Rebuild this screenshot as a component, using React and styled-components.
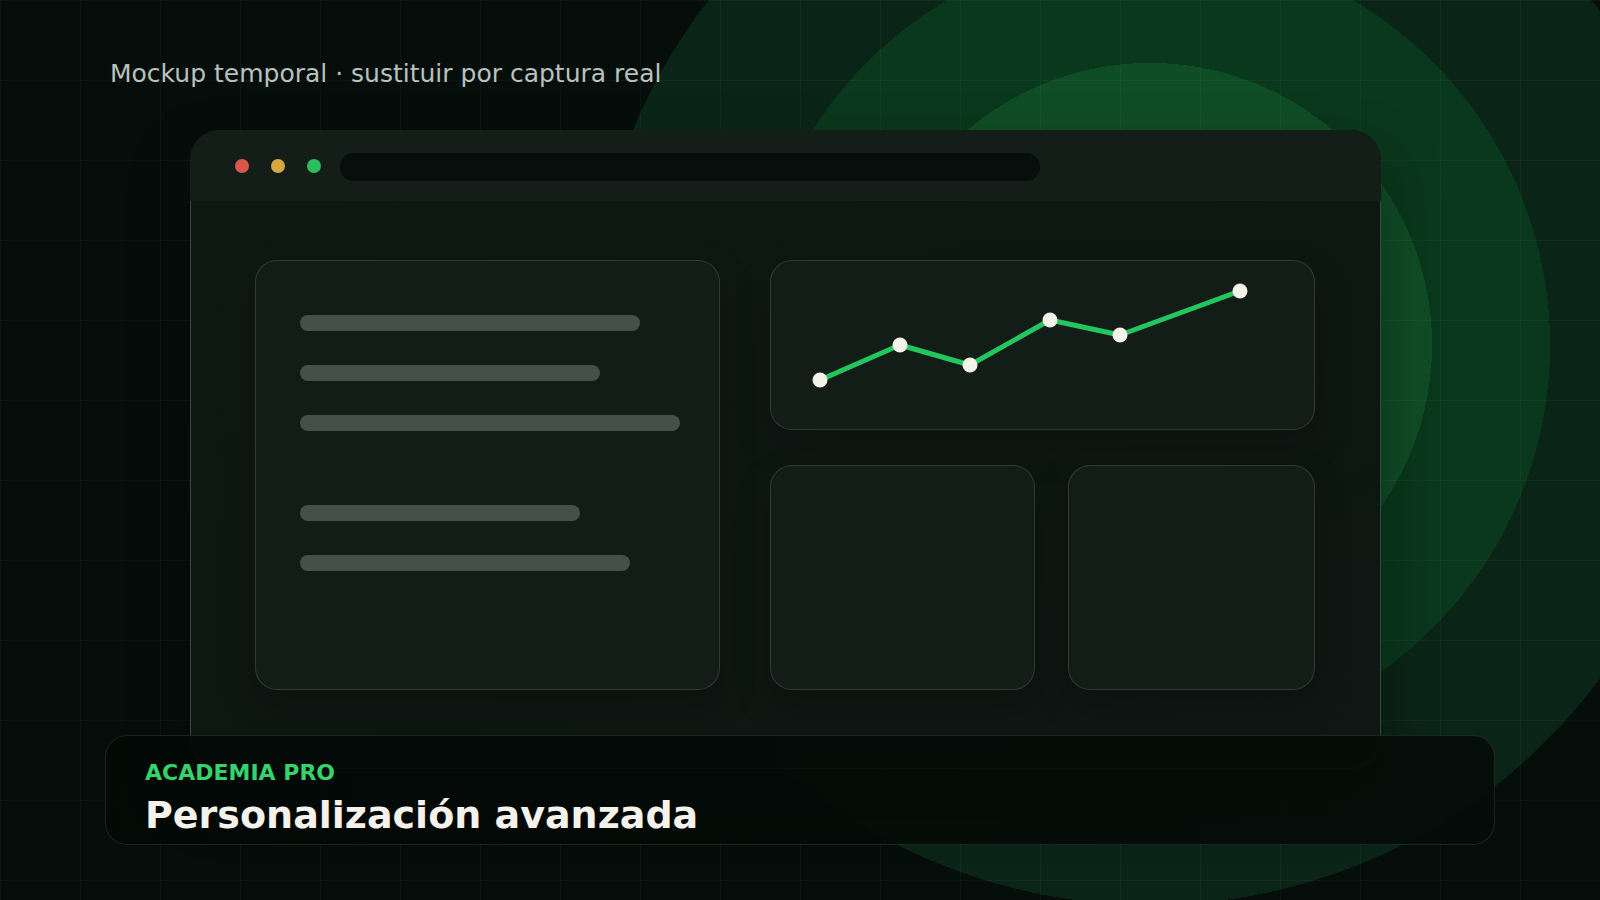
import React from 'react';
import styled, { createGlobalStyle } from 'styled-components';

const GlobalStyle = createGlobalStyle`
  html,
  body {
    margin: 0;
    padding: 0;
    background: #060e0b;
  }
  body {
    font-family: 'DejaVu Sans', 'Noto Sans', sans-serif;
  }
  * {
    box-sizing: border-box;
  }
`;

const lines = [340, 300, 380, 280, 330];
const points = [
  [49, 119],
  [129, 84],
  [199, 104],
  [279, 59],
  [349, 74],
  [469, 30],
];

const App = () => {
  return (
    <>
      <GlobalStyle />
      <Stage>
        <Note>Mockup temporal · sustituir por captura real</Note>

        <Window>
          <TitleBar>
            <Lights>
              <Light color="#d9574a" />
              <Light color="#d8a840" />
              <Light color="#2dbd5e" />
            </Lights>
            <AddressBar />
          </TitleBar>

          <Body>
            <Panel className="text-panel">
              {lines.map((w, i) => (
                <Line key={i} $w={w} $spaced={i === 3} />
              ))}
            </Panel>

            <RightColumn>
              <Panel>
                <svg width="543" height="168">
                  <polyline
                    points={points.map((p) => p.join(',')).join(' ')}
                    fill="none"
                    stroke="#22c55e"
                    strokeWidth="5"
                    strokeLinejoin="round"
                    strokeLinecap="round"
                  />
                  {points.map(([x, y], i) => (
                    <circle key={i} cx={x} cy={y} r="7.5" fill="#f4f3ea" />
                  ))}
                </svg>
              </Panel>
              <BottomRow>
                <Panel />
                <Panel />
              </BottomRow>
            </RightColumn>
          </Body>
        </Window>

        <Caption>
          <Eyebrow>ACADEMIA PRO</Eyebrow>
          <Title>Personalización avanzada</Title>
        </Caption>
      </Stage>
    </>
  );
};
export default App;

const Stage = styled.main`
  width: 1600px;
  height: 900px;
  overflow: hidden;
  padding: 59px 105px 0;
  display: flex;
  flex-direction: column;
  align-items: flex-start;

  background-color: #060e0b;
  background-image: linear-gradient(to right, rgba(255, 255, 255, 0.03) 1px, transparent 1px),
    linear-gradient(to bottom, rgba(255, 255, 255, 0.03) 1px, transparent 1px),
    radial-gradient(
      circle at 1150px 345px,
      #0f4d26 0 282px,
      #0a381c 282px 400px,
      #0a2517 400px 560px,
      transparent 560px
    );
  background-size: 80px 80px, 80px 80px, 100% 100%;
`;

const Note = styled.p`
  margin: 0 0 0 5px;
  font-size: 25px;
  line-height: 30px;
  color: #b8c2bd;
`;

const Window = styled.section`
  margin: 41px 0 0 85px;
  width: 1191px;
  border-radius: 30px;
  overflow: hidden;
  background: linear-gradient(165deg, #0e1914 0%, #0d1712 70%, #0f1714 100%);
  box-shadow: 0 30px 60px rgba(0, 0, 0, 0.35);
`;

const TitleBar = styled.div`
  height: 71px;
  padding-left: 45px;
  display: flex;
  align-items: center;
  gap: 19px;
  background: #131e19;
`;

const Lights = styled.div`
  display: flex;
  gap: 22px;
`;

const Light = styled.span`
  width: 14px;
  height: 14px;
  border-radius: 50%;
  background: ${(props) => props.color};
`;

const AddressBar = styled.div`
  width: 700px;
  height: 28px;
  margin-top: 2px;
  border-radius: 14px;
  background: #070e0b;
`;

const Body = styled.div`
  padding: 59px 65px 78px 64px;
  border: 1px solid rgba(160, 200, 180, 0.28);
  border-top: none;
  border-radius: 0 0 30px 30px;
  display: grid;
  grid-template-columns: 465fr 545fr;
  gap: 50px;

  .text-panel {
    height: 430px;
    padding: 54px 44px;
    display: flex;
    flex-direction: column;
    gap: 34px;
  }
`;

const Panel = styled.div`
  border: 1px solid rgba(255, 255, 255, 0.13);
  border-radius: 22px;
  background: #131d18;
  box-shadow: 0 16px 36px rgba(0, 0, 0, 0.22);
  overflow: hidden;

  svg {
    display: block;
  }
`;

const Line = styled.span`
  display: block;
  width: ${(props) => props.$w}px;
  height: 16px;
  flex-shrink: 0;
  border-radius: 8px;
  background: #435148;
  margin-top: ${(props) => (props.$spaced ? '40px' : '0')};
`;

const RightColumn = styled.div`
  display: grid;
  grid-template-rows: 170px 225px;
  gap: 35px;
`;

const BottomRow = styled.div`
  display: grid;
  grid-template-columns: 265fr 247fr;
  gap: 33px;
`;

const Caption = styled.div`
  position: relative;
  z-index: 1;
  width: 100%;
  height: 110px;
  margin-top: -34px;
  padding: 24px 39px 0;
  border: 1px solid rgba(255, 255, 255, 0.1);
  border-radius: 22px;
  background: linear-gradient(90deg, rgba(3, 9, 6, 0.93), rgba(5, 12, 9, 0.9));
`;

const Eyebrow = styled.div`
  font-size: 22px;
  line-height: 26px;
  font-weight: 700;
  color: #34d36b;
`;

const Title = styled.h1`
  margin: 6px 0 0 0;
  font-size: 38px;
  line-height: 46px;
  font-weight: 700;
  color: #f4f2ea;
`;
